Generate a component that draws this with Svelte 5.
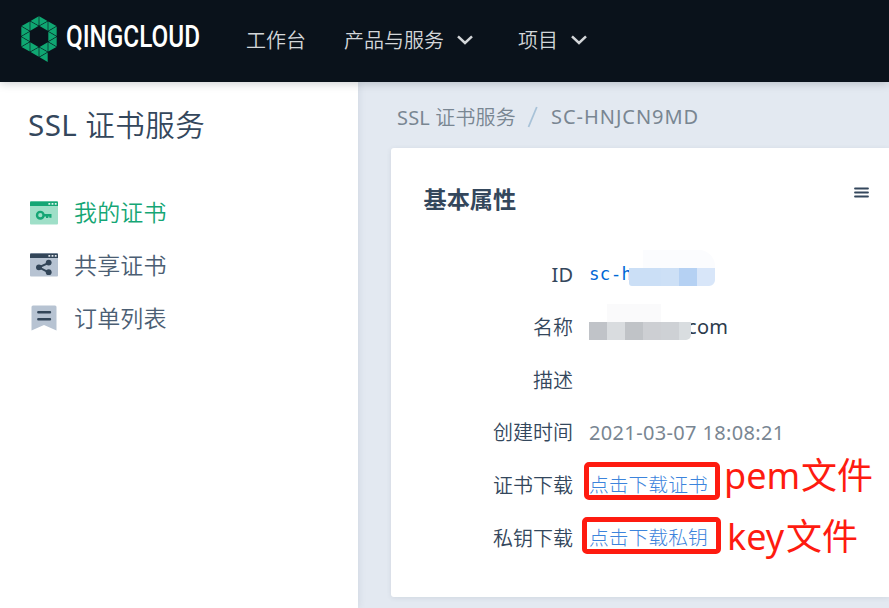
<script>
  const cx = 39, cy = 36.5, w = 9, h = 5.2;
  const triangles = [];
  function add(points) {
    const mx = points.reduce((s, p) => s + p[0], 0) / 3;
    const my = points.reduce((s, p) => s + p[1], 0) / 3;
    triangles.push(
      points
        .map(([x, y]) => [cx + (mx + (x - mx) * 0.9) * w, cy + (my + (y - my) * 0.9) * h])
        .map(([x, y]) => `${x.toFixed(2)},${y.toFixed(2)}`)
        .join(' ')
    );
  }
  for (let i = -2; i < 2; i++) {
    for (let j = -5; j < 5; j++) {
      const even = Math.abs(i + j) % 2 === 0;
      const t = even
        ? [[i, j], [i, j + 2], [i + 1, j + 1]]
        : [[i + 1, j], [i + 1, j + 2], [i, j + 1]];
      const outer = t.every(([x, y]) => Math.abs(x) + Math.abs(y) <= 4);
      const inner = t.every(([x, y]) => Math.abs(x) + Math.abs(y) <= 2 && Math.abs(x) <= 1);
      if (outer && !inner) add(t);
    }
  }
  add([[0, 4], [1, 3], [1, 5]]);

  const idMosaic = ['#cbdff6', '#cbdff6', '#cde0f6', '#b5d1f3', '#d8e6f9'];
  const nameMosaic = ['#c0c3c8', '#d9dcdf', '#c0c3c7', '#cdcfd3', '#ced1d5', '#d9dde0'];
</script>

<div class="page">
  <header>
    <svg class="logo" width="210" height="82" viewBox="0 0 210 82">
      {#each triangles as points}<polygon {points} fill="#0fa772" />{/each}
      <text x="66" y="47.3" textLength="134" lengthAdjust="spacingAndGlyphs">QINGCLOUD</text>
    </svg>
    <nav>
      <span>工作台</span>
      <span class="products">产品与服务<svg width="18" height="12" viewBox="0 0 18 12"><path d="M2 2.3 9 9 16 2.3" /></svg></span>
      <span class="projects">项目<svg width="18" height="12" viewBox="0 0 18 12"><path d="M2 2.3 9 9 16 2.3" /></svg></span>
    </nav>
  </header>
  <div class="body">
    <aside>
      <h1><span class="latin">SSL</span> 证书服务</h1>
      <ul>
        <li class="active">
          <svg width="28" height="24" viewBox="0 0 28 24">
            <rect width="28" height="23.5" rx="1" fill="#9fdfc8" />
            <path d="M0 5V1.5Q0 .5 1 .5H27Q28 .5 28 1.5V5Z" fill="#15a675" />
            <path d="M18.4 2h1.8v1.8h-1.8zM21.6 2h1.8v1.8h-1.8zM24.8 2h1.8v1.8h-1.8z" fill="#dff5ed" />
            <circle cx="10.3" cy="14.2" r="3.3" fill="none" stroke="#15a675" stroke-width="2.4" />
            <path d="M13.5 13h8v3.8h-2.2V15.5h-1V17H16v-1.5h-2.5z" fill="#15a675" />
          </svg>
          <span>我的证书</span>
        </li>
        <li>
          <svg width="28" height="24" viewBox="0 0 28 24">
            <rect width="28" height="23.5" rx="1" fill="#b7c3d2" />
            <path d="M0 5V1.5Q0 .5 1 .5H27Q28 .5 28 1.5V5Z" fill="#324558" />
            <path d="M18.4 2h1.8v1.8h-1.8zM21.6 2h1.8v1.8h-1.8zM24.8 2h1.8v1.8h-1.8z" fill="#e5eaf0" />
            <path d="M18.7 9.8 8.9 14.3l9.8 5" fill="none" stroke="#324558" stroke-width="2" />
            <circle cx="8.9" cy="14.3" r="2.9" fill="#324558" />
            <circle cx="18.7" cy="9.6" r="2.9" fill="#324558" />
            <circle cx="18.7" cy="19.2" r="2.9" fill="#324558" />
          </svg>
          <span>共享证书</span>
        </li>
        <li>
          <svg width="28" height="26" viewBox="0 0 28 26">
            <path d="M3 .5H25Q26.5 .5 26.5 2V25.5L14 20 1.5 25.5V2Q1.5 .5 3 .5Z" fill="#b7c3d2" />
            <path d="M8.3 7.3H20M8.3 14.3H20" stroke="#324558" stroke-width="2.4" stroke-linecap="round" />
          </svg>
          <span>订单列表</span>
        </li>
      </ul>
    </aside>
    <main>
      <div class="crumbs">
        <span class="parent"><span class="latin">SSL</span> 证书服务</span>
        <svg width="12" height="22" viewBox="0 0 12 22"><path d="M1.5 21 9.8 1" fill="none" stroke="#a8c2d8" stroke-width="1.8" /></svg>
        <span class="latin current">SC-HNJCN9MD</span>
      </div>
      <section>
        <div class="head">
          <h2>基本属性</h2>
          <svg width="15" height="12" viewBox="0 0 15 12"><path d="M1 1.5H14M1 5.5H14M1 9.5H14" stroke="#34475c" stroke-width="1.8" stroke-linecap="round" /></svg>
        </div>
        <dl>
          <div class="row">
            <dt class="latin">ID</dt>
            <dd class="id">sc-h
              <div class="mask id-mask">
                <div class="haze"></div>
                <div class="blocks">{#each idMosaic as c}<i style:background={c}></i>{/each}</div>
              </div>
            </dd>
          </div>
          <div class="row">
            <dt>名称</dt>
            <dd class="name"><span class="latin">com</span>
              <div class="faint"></div>
              <div class="mask name-mask">
                <div class="blocks">{#each nameMosaic as c}<i style:background={c}></i>{/each}</div>
              </div>
            </dd>
          </div>
          <div class="row"><dt>描述</dt><dd></dd></div>
          <div class="row"><dt>创建时间</dt><dd class="time latin">2021-03-07 18:08:21</dd></div>
          <div class="row">
            <dt>证书下载</dt>
            <dd class="link">点击下载证书<b class="frame pem"></b><em class="note pem-note"><span>pem</span>文件</em></dd>
          </div>
          <div class="row">
            <dt>私钥下载</dt>
            <dd class="link">点击下载私钥<b class="frame key"></b><em class="note key-note"><span>key</span>文件</em></dd>
          </div>
        </dl>
      </section>
    </main>
  </div>
</div>

<style>
  .page {
    width: 889px;
    height: 608px;
    overflow: hidden;
    display: flex;
    flex-direction: column;
    font-family: "Noto Sans", "Noto Sans CJK SC", sans-serif;
    font-weight: 350;
    color: #34475c;
  }
  .latin { font-weight: 400; }
  header {
    height: 82px;
    flex: none;
    display: flex;
    background: #0a121b;
    box-shadow: 0 1px 9px rgba(10, 18, 27, 0.22);
    position: relative;
    z-index: 2;
  }
  .logo { flex: none; overflow: visible; }
  .logo text {
    font-family: Roboto, sans-serif;
    font-size: 31px;
    font-weight: 500;
    fill: #fff;
  }
  nav {
    display: flex;
    align-items: center;
    padding: 0 0 1px 36px;
    font-size: 20px;
    line-height: 30px;
    color: #d3d6d9;
  }
  nav span { display: flex; align-items: center; }
  nav svg { margin: -2px 0 0 12px; }
  nav path { fill: none; stroke: #d3d6d9; stroke-width: 2.5; }
  .products { margin-left: 38px; }
  .projects { margin-left: 44px; }
  .body { display: flex; flex: 1; min-height: 0; }
  aside {
    width: 358px;
    flex: none;
    background: #fff;
    box-shadow: 0 0 8px rgba(50, 69, 88, 0.12);
    z-index: 1;
  }
  h1 {
    margin: 22px 0 0 28px;
    font-size: 29.5px;
    line-height: 42px;
    font-weight: 350;
    letter-spacing: 0.45px;
    white-space: nowrap;
  }
  ul { list-style: none; margin: 41px 0 0; padding: 0 0 0 30px; }
  li {
    display: flex;
    align-items: center;
    gap: 16px;
    height: 52.6px;
    font-size: 23px;
    color: #4b5e73;
  }
  li svg { margin-top: -1px; }
  li span { margin: -3px 0 0 0; letter-spacing: 0.15px; }
  li.active { color: #15a675; }
  li.active span { margin-top: -5px; }
  main {
    flex: 1;
    min-width: 0;
    padding-left: 33px;
    background: #e3e9f1;
  }
  .crumbs {
    height: 66px;
    padding: 3px 0 0 6px;
    box-sizing: border-box;
    display: flex;
    align-items: center;
    font-size: 20px;
    color: #798692;
  }
  .parent { width: 119px; letter-spacing: 0.15px; white-space: nowrap; }
  .current { letter-spacing: 0.96px; }
  .crumbs svg { margin: 0 12px 0 11px; }
  section {
    height: 449px;
    background: #fff;
    border-radius: 3px 0 0 3px;
    box-shadow: 0 1px 5px rgba(50, 69, 88, 0.1);
  }
  .head {
    height: 101px;
    display: flex;
    justify-content: space-between;
    align-items: flex-start;
    padding: 34px 20px 0 32.5px;
    box-sizing: border-box;
  }
  .head svg { margin-top: 5px; }
  h2 { margin: 0; font-size: 23.2px; line-height: 34px; font-weight: 700; }
  dl { margin: 0; }
  .row {
    display: flex;
    gap: 16px;
    height: 52.7px;
    align-items: center;
    font-size: 20px;
    line-height: 30px;
  }
  dt { width: 182px; text-align: right; flex: none; }
  dd { margin: 0; position: relative; white-space: nowrap; height: 30px; }
  .id {
    color: #0067d6;
    font-family: "DejaVu Sans Mono", monospace;
    font-size: 17.5px;
    font-weight: 400;
    line-height: 28px;
    letter-spacing: 0.3px;
  }
  .mask { position: absolute; overflow: hidden; }
  .id-mask { left: 40px; top: -10px; width: 86px; height: 36px; border-radius: 10px 16px 6px 3px; }
  .haze { height: 18px; margin-left: 14px; background: #fbfcfe; }
  .blocks { display: flex; height: 18px; }
  .blocks i { width: 18px; flex: none; }
  .id-mask .blocks i:first-child { width: 14px; }
  .name span { padding-left: 98px; color: #2c3b4c; letter-spacing: 0.3px; }
  .name { line-height: 28px; }
  .faint { position: absolute; left: 18px; top: -9px; width: 54px; height: 18px; background: #fafafb; }
  .name-mask { left: 0; top: 9px; width: 102px; height: 18px; border-radius: 0 0 5px 0; }
  .time { color: #798692; letter-spacing: 0.35px; }
  .link { color: #3c84dc; font-size: 19.8px; font-weight: 300; line-height: 27px; }
  .frame { position: absolute; box-sizing: border-box; border: 5px solid #fe1b10; border-radius: 5px; }
  .pem { left: -5px; top: -9px; width: 136px; height: 38px; }
  .key { left: -7px; top: -7px; width: 139px; height: 37px; }
  .note {
    position: absolute;
    display: flex;
    font-style: normal;
    font-size: 36px;
    line-height: 48px;
    color: #fe1b10;
    font-weight: 400;
  }
  .note span { display: block; }
  .pem-note { left: 135px; top: -19px; }
  .pem-note span { width: 77px; }
  .key-note { left: 138px; top: -11px; }
  .key-note span { width: 59px; }
</style>
